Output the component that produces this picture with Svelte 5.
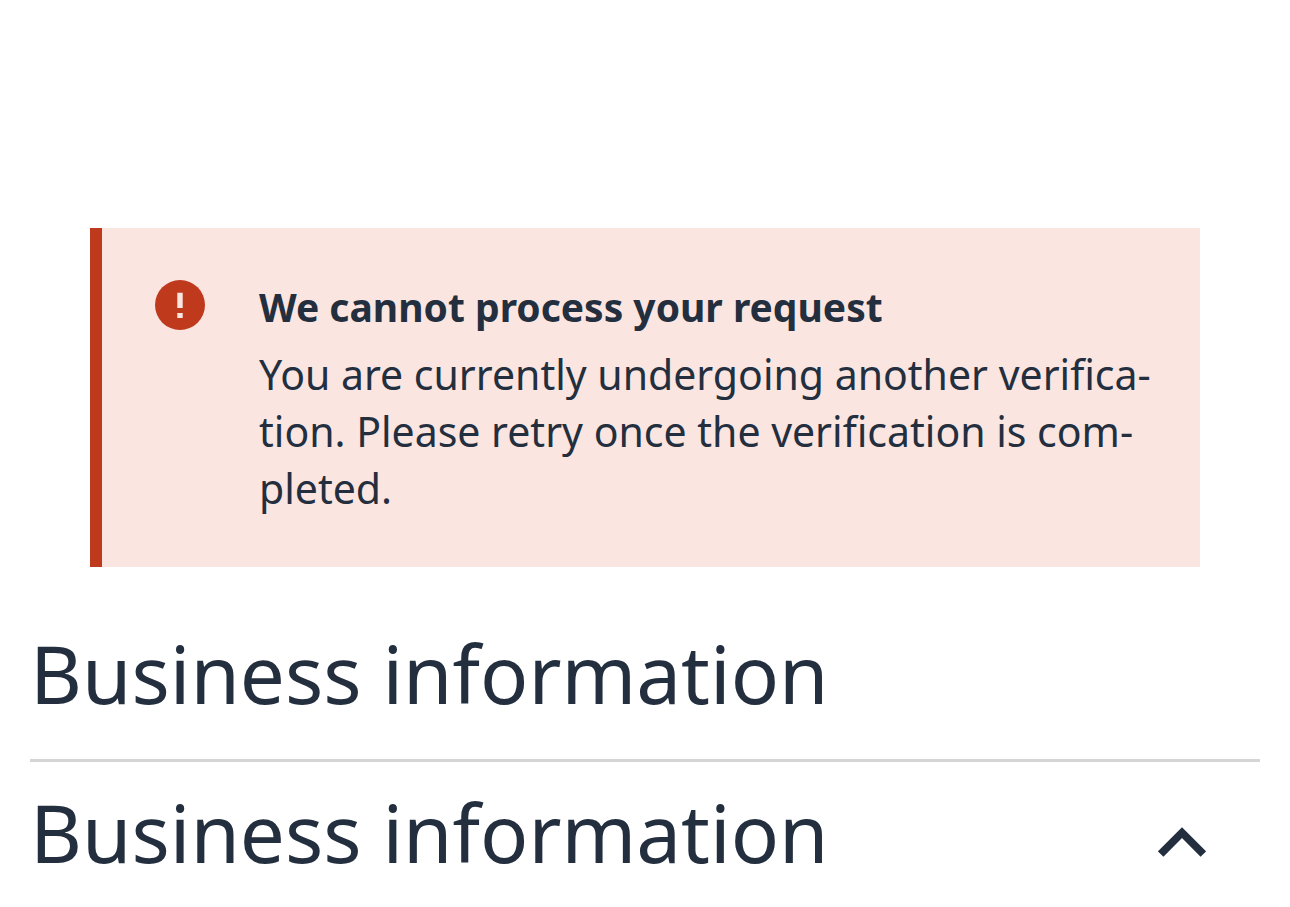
<script>
  let open = true;

  function toggle() {
    open = !open;
  }
</script>

<main>
  <section class="alert" role="alert">
    <svg class="alert-icon" viewBox="0 0 50 50" aria-hidden="true">
      <circle cx="25" cy="25" r="25" fill="#bf391d" />
      <path d="M22.3 12.7h5.4V28h-5.4zM22.3 33h5.4v5h-5.4z" fill="#fae5e1" />
    </svg>
    <div class="alert-text">
      <h2>We cannot process your request</h2>
      <p>You are currently undergoing another verifica&shy;tion. Please retry once the verification is com&shy;pleted.</p>
    </div>
  </section>

  <h1>Business information</h1>

  <section class="panel">
    <button type="button" aria-expanded={open} on:click={toggle}>
      <span>Business information</span>
      <svg class="chevron" class:closed={!open} viewBox="0 0 48 30" aria-hidden="true">
        <path d="M2.7 27.1L24 5.6l21.3 21.5" fill="none" stroke="#232f3e" stroke-width="7.7" />
      </svg>
    </button>
  </section>
</main>

<style>
  :global(body) {
    background: #fff;
    color: #232f3e;
    font-family: "Noto Sans", "Open Sans", sans-serif;
  }

  main {
    padding: 228px 30px 0;
  }

  .alert {
    display: flex;
    align-items: flex-start;
    gap: 54px;
    margin: 0 60px;
    padding: 50px 44px 50px 53px;
    border-left: 12px solid #bf391d;
    background: #fae5e1;
  }

  .alert-icon {
    flex: none;
    width: 50px;
    height: 50px;
    margin-top: 2px;
  }

  .alert-text {
    flex: 1;
    min-width: 0;
  }

  h2 {
    margin: 0 0 10px;
    font-size: 39px;
    line-height: 58px;
    font-weight: 700;
  }

  p {
    margin: 0;
    font-size: 41px;
    line-height: 57px;
  }

  h1 {
    margin: 0;
    padding: 50px 0 30px;
    font-size: 80px;
    line-height: 112px;
    font-weight: 400;
  }

  .panel {
    border-top: 3px solid #d5d5d5;
  }

  button {
    display: flex;
    align-items: center;
    justify-content: space-between;
    width: 100%;
    padding: 14px 54px 14px 0;
    border: 0;
    background: none;
    color: inherit;
    font: inherit;
    font-size: 80px;
    line-height: 112px;
    text-align: left;
    cursor: pointer;
  }

  .chevron {
    flex: none;
    width: 48px;
    height: 30px;
    margin-top: 20px;
  }

  .closed {
    transform: rotate(180deg);
  }
</style>
